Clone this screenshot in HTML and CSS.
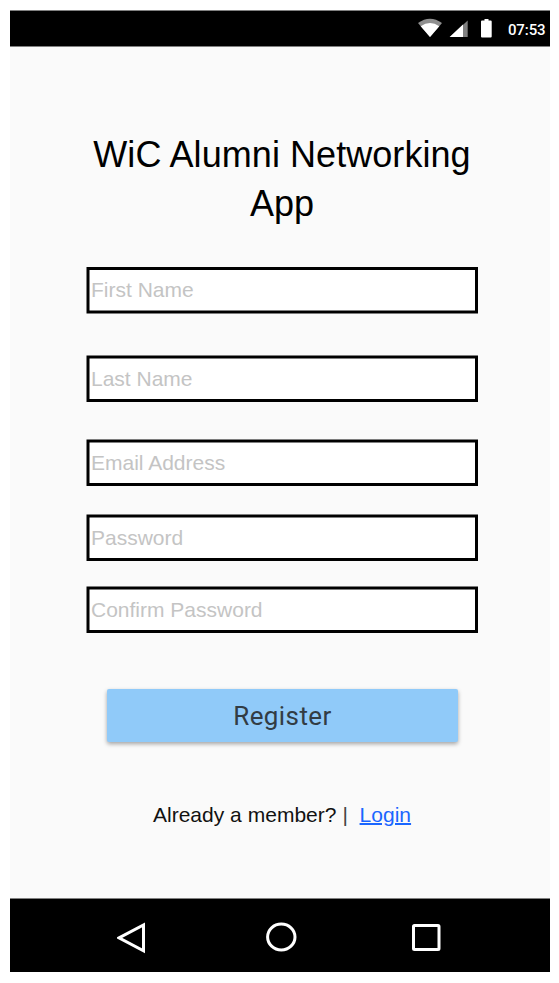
FILE: index.html
```html
<!DOCTYPE html>
<html lang="en">
<head>
<meta charset="utf-8">
<title>WiC Alumni Networking App</title>
<link rel="stylesheet" href="styles.css">
</head>
<body>
<main class="phone">
  <header class="status">
    <svg class="status-icons" width="80" height="24" viewBox="0 0 80 24" aria-hidden="true">
      <path fill="#8f8f8f" d="M0 6Q12-2.500 24 6L12 20Z"/>
      <path fill="#fff" d="M2.700 9.200Q12 3 21.300 9.200L12 20Z"/>
      <path fill="#808080" d="M49.700 3.500V20H31.700Z"/>
      <path fill="#fff" d="M45 7.500V20H31.700Z"/>
      <path fill="#fff" d="M66.500 2H70.500V3.500H72.700Q73.700 3.500 73.700 4.500V19.500Q73.700 20.500 72.700 20.500H64Q63 20.500 63 19.500V4.500Q63 3.500 64 3.500H66.500Z"/>
    </svg>
    <span class="time">07:53</span>
  </header>
  <section class="content">
    <h1 class="title">WiC Alumni Networking App</h1>
    <form class="form">
      <label class="field first"><svg class="frame" width="392" height="47"><rect x="2" y="1.500" width="388.500" height="43.500"/></svg><span>First Name</span></label>
      <label class="field last"><svg class="frame" width="392" height="47"><rect x="2" y="2" width="388.500" height="43.500"/></svg><span>Last Name</span></label>
      <label class="field email"><svg class="frame" width="392" height="47"><rect x="2" y="2" width="388.500" height="43.500"/></svg><span>Email Address</span></label>
      <label class="field password"><svg class="frame" width="392" height="47"><rect x="2" y="2" width="388.500" height="43.500"/></svg><span>Password</span></label>
      <label class="field confirm"><svg class="frame" width="392" height="47"><rect x="2" y="2" width="388.500" height="43.500"/></svg><span>Confirm Password</span></label>
      <button class="register" type="button">Register</button>
    </form>
    <p class="member">Already a member? <span class="divider">|</span>&nbsp; <a class="login" href="#">Login</a></p>
  </section>
  <nav class="navbar">
    <svg width="30" height="34" viewBox="0 0 30 34" aria-label="Back"><path d="M2 16.800L26.500 3.900V29.800Z"/></svg>
    <svg width="32" height="34" viewBox="0 0 32 34" aria-label="Home"><ellipse cx="16.300" cy="16" rx="13.700" ry="13"/></svg>
    <svg width="30" height="34" viewBox="0 0 30 34" aria-label="Recent apps"><rect x="2.500" y="4.500" width="25.500" height="24" rx="1"/></svg>
  </nav>
</main>
</body>
</html>
```

FILE: styles.css
```css
* { box-sizing: border-box; }

body {
  margin: 0;
  background: #fff;
  font-family: "Liberation Sans", Arial, sans-serif;
}

.phone {
  display: flex;
  flex-direction: column;
  width: 540px;
  height: 962px;
  margin: 10px 0 0 10px;
  background: #fafafa;
}

.status {
  display: flex;
  align-items: center;
  justify-content: flex-end;
  height: 37px;
  padding-right: 4.500px;
  background: #000;
  border-top: 1px solid #808080;
  border-bottom: 1px solid #808080;
}

.status-icons { margin: 1px 10px 0 0; }

.time {
  padding-top: 2px;
  color: #fff;
  font: 500 15px/20px Roboto, sans-serif;
  letter-spacing: -.1px;
}

.content {
  display: flex;
  flex: 1;
  flex-direction: column;
  align-items: center;
  padding: 83px 72px 0 76px;
}

.title {
  margin: 0;
  color: #000;
  font-size: 36px;
  font-weight: 400;
  letter-spacing: .06px;
  line-height: 49px;
  text-align: center;
}

.form {
  display: flex;
  flex-direction: column;
  width: 392px;
  margin-top: 39px;
}

.field {
  position: relative;
  display: flex;
  height: 47px;
  padding: 11px 0 0 5px;
  color: #c4c4c4;
  font-size: 21px;
  line-height: 24px;
}

.field span { position: relative; }

.frame {
  position: absolute;
  top: 0;
  left: 0;
}

.frame rect {
  fill: #fff;
  stroke: #000;
  stroke-width: 3px;
}

.last { margin-top: 41px; padding-top: 12px; }
.email { margin-top: 37px; padding-top: 12px; }
.password { margin-top: 28px; padding-top: 12px; }
.confirm { margin-top: 25px; padding-top: 12px; }

.register {
  width: 351px;
  height: 53px;
  margin: 56px 0 0 21px;
  padding: 2px 0 0;
  border: 0;
  border-radius: 2px;
  background: #90caf9;
  box-shadow: 0 2px 4px rgba(0, 0, 0, .35);
  color: #323c44;
  font: 400 26px/51px Roboto, sans-serif;
  letter-spacing: .4px;
}

.member {
  margin: 61px 0 0;
  color: #111;
  font-size: 21px;
  letter-spacing: .02px;
  line-height: 24px;
  white-space: nowrap;
}

.divider { color: #444; }

.login {
  color: #1a66ff;
  text-decoration-thickness: 1.500px;
}

.navbar {
  display: flex;
  height: 74px;
  padding: 22px 0 0 107px;
  background: #000;
  border-top: 1px solid #808080;
}

.navbar svg {
  flex: none;
  fill: none;
  stroke: #fff;
  stroke-width: 3px;
}

.navbar svg + svg { margin-left: 118px; }
.navbar svg:last-child { margin-left: 114px; }
```
